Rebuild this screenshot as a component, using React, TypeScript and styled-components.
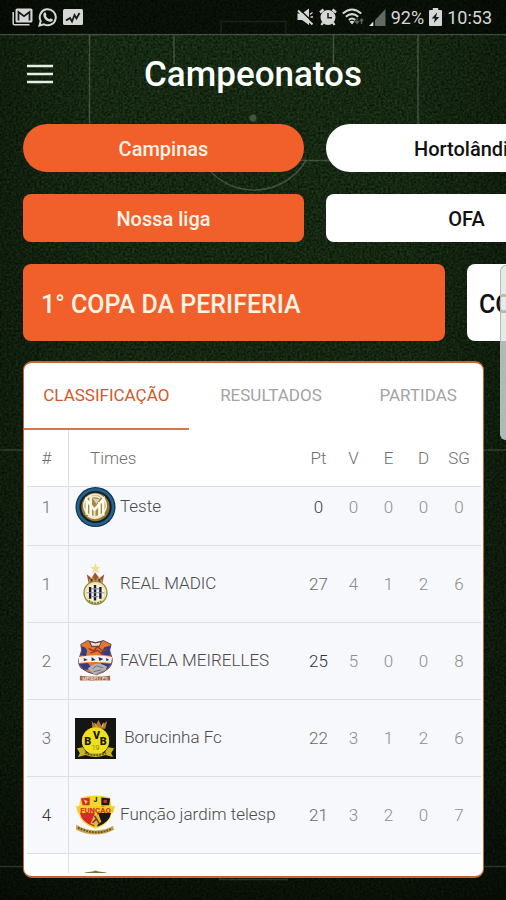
import React, { useLayoutEffect, useRef, useState } from "react";
import styled, { createGlobalStyle } from "styled-components";

const ORANGE = "#f1602a";

const GlobalStyle = createGlobalStyle`
  * { box-sizing: border-box; }
  body { margin: 0; background: #0f2414; font-family: Roboto, "Liberation Sans", sans-serif; }
  button { font-family: inherit; cursor: pointer; }
`;

const Screen = styled.div`
  position: relative;
  height: 100vh;
  display: flex;
  flex-direction: column;
  overflow: hidden;
  isolation: isolate;
`;

const Pitch = styled.svg`
  position: absolute;
  inset: 0;
  width: 100%;
  height: 100%;
  z-index: -1;
`;

const StatusBar = styled.div`
  flex: none;
  height: 34px;
  padding: 0 14px 0 12px;
  display: flex;
  justify-content: space-between;
  align-items: center;
  background: rgba(0, 0, 0, 0.6);
  color: #d6d6d6;
  font-size: 18px;
`;

const StatusGroup = styled.div<{ $gap: number }>`
  display: flex;
  align-items: center;
  gap: ${(p) => p.$gap}px;
`;

const Header = styled.header`
  flex: none;
  height: 90px;
  padding: 0 25px 10px;
  display: grid;
  grid-template-columns: 28px 1fr 28px;
  align-items: center;
`;

const MenuButton = styled.button`
  height: 28px;
  padding: 0;
  border: 0;
  background: none;
  display: flex;
  align-items: center;
`;

const Title = styled.h1`
  margin: 0;
  padding-top: 2px;
  text-align: center;
  color: #fff;
  font-size: 35px;
  line-height: 40px;
  font-weight: 500;
`;

const Carousel = styled.div`
  flex: none;
  display: flex;
  gap: 22px;
  padding: 0 23px;
  margin-bottom: 22px;
  overflow: hidden;
`;

const Chip = styled.button<{ $active?: boolean; $round?: boolean }>`
  flex: 0 0 281px;
  height: 48px;
  padding: 2px 0 0;
  border: 0;
  border-radius: ${(p) => (p.$round ? 24 : 8)}px;
  background: ${(p) => (p.$active ? ORANGE : "#fff")};
  color: ${(p) => (p.$active ? "#fff3e6" : "#111")};
  font-size: 20px;
  font-weight: 500;
`;

const CupCard = styled.button<{ $active?: boolean }>`
  flex: 0 0 422px;
  height: 77px;
  padding: 3px ${(p) => (p.$active ? 18 : 12)}px 0;
  border: 0;
  border-radius: 8px;
  background: ${(p) => (p.$active ? ORANGE : "#fff")};
  color: ${(p) => (p.$active ? "#fff3e6" : "#111")};
  font-size: 25px;
  font-weight: 500;
  text-align: left;
`;

const Panel = styled.main`
  flex: 1;
  min-height: 0;
  margin: -2px 22px 22px 23px;
  padding-bottom: 3px;
  display: flex;
  flex-direction: column;
  border: 1px solid #c9622f;
  border-width: 2px 1px;
  border-radius: 9px;
  background: #fff;
  overflow: hidden;
`;

const Tabs = styled.div`
  flex: none;
  display: flex;
  height: 67px;
`;

const Tab = styled.button<{ $share: number; $active: boolean }>`
  flex: ${(p) => p.$share} 1 0;
  min-width: 0;
  padding: 0 0 2px;
  border: 0;
  border-bottom: 2px solid ${(p) => (p.$active ? "#d9754f" : "transparent")};
  background: none;
  color: ${(p) => (p.$active ? "#d0592b" : "#a3a3a3")};
  font-size: 17px;
`;

const Scroller = styled.div`
  flex: 1;
  min-height: 0;
  margin: 0 2px 0 3px;
  overflow-y: auto;
  scrollbar-width: none;
`;

const Standings = styled.table`
  width: 100%;
  table-layout: fixed;
  border-collapse: separate;
  border-spacing: 0;
  font-size: 17px;
  font-weight: 300;
`;

const HeadCell = styled.th<{ $width?: number; $align?: string }>`
  position: sticky;
  top: 0;
  z-index: 1;
  width: ${(p) => (p.$width ? p.$width + "px" : "auto")};
  height: 57px;
  padding: 0;
  background: #fff;
  border-bottom: 1px solid #dcdee2;
  color: #6f6f6f;
  font-weight: 300;
  text-align: ${(p) => p.$align || "center"};

  &:first-child { border-right: 1px solid #dddfe3; padding-right: 2px; }
  &:nth-child(2) { padding-left: 21px; }
  &:last-child { padding-right: 4px; }
`;

const Cell = styled.td<{ $tone?: string }>`
  height: 77px;
  padding: 0;
  background: #f7f8fc;
  border-bottom: 1px solid #dcdee2;
  color: ${(p) => p.$tone || "#8d8d8d"};
  text-align: center;

  &:first-child { border-right: 1px solid #dddfe3; padding-right: 2px; }
  &:last-child { padding-right: 4px; }
  tr:last-child > & { background: #fdfdfe; }
`;

const Team = styled.div`
  display: flex;
  align-items: center;
  gap: 4px;
  padding-left: 6px;
  white-space: nowrap;
`;

const TeamName = styled.span`
  padding-bottom: 3px;
  color: #4a4a4a;
`;

const EdgeHandle = styled.div`
  position: absolute;
  top: 265px;
  right: 0;
  width: 6px;
  height: 175px;
  border: 1px solid #b4b9b5;
  border-right: 0;
  border-radius: 6px 0 0 6px;
  background: rgba(224, 229, 225, 0.78);
`;

const PitchBackground = () => (
  <Pitch viewBox="0 0 506 900" preserveAspectRatio="none" aria-hidden="true">
    <defs>
      <filter id="grass" x="0" y="0" width="100%" height="100%" colorInterpolationFilters="sRGB">
        <feTurbulence type="fractalNoise" baseFrequency="0.43" numOctaves="2" seed="4" />
        <feColorMatrix values="0.18 0 0 0 -0.005  0.24 0 0 0 0.04  0.16 0 0 0 -0.01  0 0 0 0 1" />
      </filter>
      <linearGradient id="shade" x1="0" y1="0" x2="0" y2="1">
        <stop offset="0" stopColor="#000" stopOpacity="0" />
        <stop offset="0.5" stopColor="#000" stopOpacity="0.1" />
        <stop offset="0.8" stopColor="#000" stopOpacity="0.22" />
        <stop offset="1" stopColor="#000" stopOpacity="0.6" />
      </linearGradient>
      <linearGradient id="sides" x1="0" y1="0" x2="1" y2="0">
        <stop offset="0" stopColor="#000" stopOpacity="0.25" />
        <stop offset="0.2" stopColor="#000" stopOpacity="0" />
        <stop offset="0.8" stopColor="#000" stopOpacity="0" />
        <stop offset="1" stopColor="#000" stopOpacity="0.25" />
      </linearGradient>
    </defs>
    <rect width="506" height="900" filter="url(#grass)" />
    <rect width="506" height="900" fill="url(#shade)" />
    <rect width="506" height="900" fill="url(#sides)" />
    <g fill="none" stroke="#b9c4bb" strokeOpacity="0.27" strokeWidth="1.5">
      <path d="M0 34.5H506M221 34V21.500H286V34" />
      <path d="M89.500 35V160.500H418V35M174 35V64M333.500 35V64" />
      <path d="M203 160.500C225 200 282 200 306 160.500" />
      <path d="M0 450H506M0 866.500H506M220 867V879.500H287V867" strokeOpacity="0.2" />
      <circle cx="253" cy="118" r="3.500" fill="#b9c4bb" fillOpacity="0.27" stroke="none" />
    </g>
  </Pitch>
);

const GmailIcon = () => (
  <svg width="21" height="18" viewBox="0 0 21 18">
    <path d="M1.200 4V15.500Q1.200 16.800 2.500 16.800H17.500" fill="none" stroke="#d6d6d6" strokeWidth="1.500" />
    <rect x="3.500" y="0.500" width="17" height="14" rx="1.500" fill="#d6d6d6" />
    <path d="M6.500 12.500V4L12 8.200 17.500 4V12.500" fill="none" stroke="#111a13" strokeWidth="1.700" />
  </svg>
);

const WhatsappIcon = () => (
  <svg width="20" height="20" viewBox="0 0 20 20">
    <path d="M1.500 18.500L2.700 14A8 8 0 1 1 6 17.300Z" fill="none" stroke="#d6d6d6" strokeWidth="2" />
    <path d="M7.300 5.200L8.600 7.700 7.900 8.900Q9.200 11.300 11.400 12.200L12.500 11.200 15 12.500Q14.700 15 12.300 14.800C8 14.200 5.300 10.700 5.300 7.400Q5.600 5.300 7.300 5.200Z" fill="#d6d6d6" />
  </svg>
);

const ActivityIcon = () => (
  <svg width="20" height="16" viewBox="0 0 20 16">
    <rect width="20" height="16" rx="1.500" fill="#d6d6d6" />
    <path d="M3 11.500L7 9 9 12.500 11.500 6 13.500 9.500 16.500 4" fill="none" stroke="#111a13" strokeWidth="1.800" />
  </svg>
);

const MuteIcon = () => (
  <svg width="17" height="18" viewBox="0 0 17 18">
    <path d="M0.500 5.500H5L12 0.500V17L5 12H0.500Z" fill="#d6d6d6" />
    <path d="M2.500 1.500L17 15" stroke="#0a110b" strokeWidth="1.500" />
    <path d="M1 2.500L15.500 16.500" stroke="#d6d6d6" strokeWidth="2" />
    <path d="M13 6.500L15.500 4.500M13.500 9H16" stroke="#d6d6d6" strokeWidth="1.300" />
  </svg>
);

const AlarmIcon = () => (
  <svg width="18" height="18" viewBox="0 0 18 18">
    <path d="M1 4.500L4.500 1.500M17 4.500L13.500 1.500M4 14.500L2.500 17M14 14.500L15.500 17" stroke="#d6d6d6" strokeWidth="2.400" />
    <circle cx="9" cy="9.500" r="7.500" fill="#d6d6d6" />
    <path d="M9 5V9.800H13" fill="none" stroke="#152018" strokeWidth="1.500" />
  </svg>
);

const WifiIcon = () => (
  <svg width="22" height="18" viewBox="0 0 22 18">
    <g fill="none" stroke="#d6d6d6" strokeWidth="2">
      <path d="M0.800 5.500Q10 -2.500 19.200 5.500" />
      <path d="M3.800 8.800Q10 3.500 16.200 8.800" />
      <path d="M6.800 12Q10 9 13.200 12" />
    </g>
    <path d="M7.500 13.500L10 16.500 12.500 13.500Q10 12 7.500 13.500Z" fill="#d6d6d6" />
    <path d="M15 10.500V15M13 13L15 15.500 17 13M19.500 16V11M17.800 13L19.500 11 21.200 13" stroke="#59605b" strokeWidth="1.300" fill="none" />
  </svg>
);

const SignalIcon = () => (
  <svg width="17" height="17" viewBox="0 0 17 17">
    <path d="M16.500 0V17H0.500Z" fill="#626964" />
    <path d="M4.500 12.500V17H0Z" fill="#e6e6e6" />
    <path d="M5.200 11V17" stroke="#0a110b" strokeWidth="1.500" />
  </svg>
);

const BatteryIcon = () => (
  <svg width="13" height="18" viewBox="0 0 12 18" preserveAspectRatio="none">
    <path d="M3.500 0H8.500V2H11Q12 2 12 3V17Q12 18 11 18H1Q0 18 0 17V3Q0 2 1 2H3.500Z" fill="#d6d6d6" />
    <path d="M7.500 4.500L2.500 10.500H5.500L4.500 15L9.500 9H6.500Z" fill="#0f1811" />
  </svg>
);

const MenuIcon = () => (
  <svg width="28" height="20" viewBox="0 0 28 20">
    <path d="M2 2H28M2 10H28M2 18H28" stroke="#e4eee4" strokeWidth="2.300" />
  </svg>
);

const InterCrest = () => (
  <svg width="41" height="42" viewBox="0 0 42 42">
    <circle cx="21" cy="21" r="20.500" fill="#15314a" />
    <circle cx="21" cy="21" r="18" fill="none" stroke="#22648f" strokeWidth="2.500" />
    <circle cx="21" cy="21" r="16" fill="#141b1c" />
    <circle cx="21" cy="21" r="14.500" fill="#8c7431" />
    <circle cx="20.500" cy="19.500" r="11.500" fill="#a38b4a" stroke="#f2eddc" strokeWidth="1.600" />
    <path d="M12 29V14L20 24 29 13V30M16 9V31M25 16V31" fill="none" stroke="#fffbed" strokeWidth="2.600" />
    <path d="M15 12Q20 8 26 12M13 30Q20 35 28 30M20 25V33" fill="none" stroke="#eee5c7" strokeWidth="2" />
    <path d="M18 12L22 18 25 13" fill="#d9d2b4" />
  </svg>
);

const RealCrest = () => (
  <svg width="41" height="42" viewBox="0 0 42 42">
    <path d="M21 0L22.600 3.500 26.300 3.700 23.500 6.200 24.500 10 21 8 17.500 10 18.500 6.200 15.500 3.700 19.300 3.500Z" fill="#f2dc96" />
    <path d="M12 11L17 15 20.500 9 25 15 30 11 28 20H14Z" fill="#9e5730" />
    <path d="M14 17L18 14 21 18 24 14 28 17 27 20H15Z" fill="#cc9461" />
    <path d="M17 16V19M25 16V19" stroke="#5a2b1c" strokeWidth="2" />
    <circle cx="21" cy="30" r="11.800" fill="#eee8a0" stroke="#8a8747" strokeWidth="1.300" />
    <circle cx="21" cy="30" r="8.800" fill="#f6f6f1" />
    <path d="M15.500 24V36M20.500 22V38M26 24V36" stroke="#1a1b2b" strokeWidth="2.500" />
    <path d="M12 30H30M17 26H25M17 34H24" stroke="#8f90a0" strokeWidth="1.200" />
    <path d="M14 38Q21 43 28 38" fill="none" stroke="#76733c" strokeWidth="1.500" strokeDasharray="2 1" />
  </svg>
);

const FavelaCrest = () => (
  <svg width="41" height="44" viewBox="0 0 42 44">
    <path d="M13 1Q21 5 29 1L37 5Q34 11 37 16 40 23 35 29 30 34 22 36 12 34 6 29 2 24 5 17 8 11 6 5Z" fill="#e6762c" stroke="#5c4652" strokeWidth="1" />
    <path d="M6 7Q15 8 11 17L5 16Q9 11 6 7ZM30 8L37 6Q34 12 37 17L26 15ZM4 25L13 24 19 31 9 31ZM27 24L37 25 33 30H25Z" fill="#333c88" />
    <path d="M15 2Q21 5 27 2L25 7H17Z" fill="#f5dfc4" stroke="#49364a" />
    <path d="M14 9L19 12 23 7 28 12 33 10M16 14L23 11 28 15" fill="none" stroke="#913b29" strokeWidth="1.500" />
    <path d="M4 18Q21 14 38 18L37 24Q21 22 4 24Z" fill="#f3f1f2" />
    <path d="M9 19L13 21 9 22ZM17 18L21 21 17 22ZM24 18L29 20 25 22ZM32 19L35 21 32 22Z" fill="#292a42" />
    <path d="M13 30Q22 21 33 28 30 35 20 36Z" fill="#b3b2b6" />
    <path d="M18 30L22 27 29 29M19 33L27 31M23 35L30 32" stroke="#716f76" fill="none" />
    <path d="M5 37Q21 39 36 37V42Q20 43 5 42Z" fill="#a3674e" />
    <text x="20.500" y="42" textAnchor="middle" fontSize="5" fontWeight="700" fill="#f3d5bd">MEIRELLES</text>
  </svg>
);

const BorucinhaCrest = () => (
  <svg width="41" height="41" viewBox="0 0 42 42">
    <rect width="42" height="42" fill="#151513" />
    <path d="M17 3L21 8 24 2 27 8 33 3 31 11H18Z" fill="#b77a32" />
    <path d="M20 5L22 9M29 5L28 9" stroke="#f3ce72" />
    <circle cx="21" cy="23.500" r="14" fill="#efdf20" />
    <path d="M2 31L8 30 12 36 30 36 34 30 40 31 37 36 39 40 31 38Q21 42 11 38L3 40 5 36Z" fill="#c8b724" />
    <path d="M10 36Q21 40 32 36" fill="none" stroke="#514c19" strokeWidth="1.500" strokeDasharray="2 1" />
    <g fill="#181812" fontWeight="900" fontSize="11" textAnchor="middle">
      <text x="13" y="28">B</text>
      <text x="22" y="21">V</text>
      <text x="29" y="28">B</text>
    </g>
    <text x="21" y="33" fontSize="7" textAnchor="middle" fill="#4b4717">19</text>
  </svg>
);

const FuncaoCrest = () => (
  <svg width="41" height="42" viewBox="0 0 42 42">
    <path d="M6 3Q21 -1 36 3L38 17Q37 30 21 35 5 30 3 17Z" fill="#f1d92c" />
    <path d="M6 4L15 3V11H8ZM5 19H20V33Q7 29 5 19Z" fill="#d62b2d" />
    <path d="M27 3L36 4 35 11H27ZM23 19H37Q35 29 23 33Z" fill="#1b1817" />
    <path d="M9 5L13 7 11 10Z" fill="#f5d55f" />
    <circle cx="31" cy="7" r="2" fill="#c72d28" />
    <path d="M1 12H41L39 19H3Z" fill="#f2ce29" />
    <text x="21" y="8" textAnchor="middle" fontSize="7" fontWeight="900" fill="#25200f">J</text>
    <text x="21" y="19" textAnchor="middle" fontSize="8" fontWeight="900" fill="#d43b25">FUNÇÃO</text>
    <path d="M16 30L19 22 24 20 27 28 22 32Z" fill="#dfb93f" />
    <path d="M18 29L22 25 25 30M20 22L22 25" stroke="#783525" strokeWidth="1.500" fill="none" />
    <path d="M1 31Q21 42 39 32L40 36Q21 46 1 36Z" fill="#c9a953" />
    <path d="M3 34Q21 43 38 35" fill="none" stroke="#725421" strokeWidth="2" strokeDasharray="2 1" />
  </svg>
);

const GreenCrest = () => (
  <svg width="41" height="44" viewBox="0 0 42 44">
    <path d="M10 2L18 1 21 0 24 1 32 2 30 34 21 43 12 34Z" fill="#78783a" />
    <circle cx="21" cy="21" r="8" fill="#e7dfa1" />
  </svg>
);

interface Row {
  pos?: number;
  name: string;
  crest: React.ReactNode;
  stats: number[];
  posTone?: string;
  ptTone?: string;
}

const rows: Row[] = [
  { pos: 1, name: "Teste", crest: <InterCrest />, stats: [0, 0, 0, 0, 0], ptTone: "#3e3e3e" },
  { pos: 1, name: "REAL MADIC", crest: <RealCrest />, stats: [27, 4, 1, 2, 6] },
  { pos: 2, name: "FAVELA MEIRELLES", crest: <FavelaCrest />, stats: [25, 5, 0, 0, 8], ptTone: "#333" },
  { pos: 3, name: "\u00a0Borucinha Fc", crest: <BorucinhaCrest />, stats: [22, 3, 1, 2, 6] },
  { pos: 4, name: "Função jardim telesp", crest: <FuncaoCrest />, stats: [21, 3, 2, 0, 7], posTone: "#333" },
  { name: "", crest: <GreenCrest />, stats: [] },
];

const tabs = [
  { label: "CLASSIFICAÇÃO", share: 165 },
  { label: "RESULTADOS", share: 165 },
  { label: "PARTIDAS", share: 130 },
];

export default function App() {
  const [tab, setTab] = useState(0);
  const scroller = useRef<HTMLDivElement>(null);

  useLayoutEffect(() => {
    if (scroller.current) scroller.current.scrollTop = 18;
  }, []);

  return (
    <Screen>
      <GlobalStyle />
      <PitchBackground />
      <StatusBar>
        <StatusGroup $gap={5}>
          <GmailIcon />
          <WhatsappIcon />
          <ActivityIcon />
        </StatusGroup>
        <StatusGroup $gap={5}>
          <MuteIcon />
          <AlarmIcon />
          <WifiIcon />
          <SignalIcon />
          <span>92%</span>
          <BatteryIcon />
          <span>10:53</span>
        </StatusGroup>
      </StatusBar>
      <Header>
        <MenuButton aria-label="Menu">
          <MenuIcon />
        </MenuButton>
        <Title>Campeonatos</Title>
      </Header>
      <Carousel>
        <Chip $active $round>Campinas</Chip>
        <Chip $round>Hortolândia</Chip>
      </Carousel>
      <Carousel>
        <Chip $active>Nossa liga</Chip>
        <Chip>OFA</Chip>
      </Carousel>
      <Carousel>
        <CupCard $active>1° COPA DA PERIFERIA</CupCard>
        <CupCard>COPA</CupCard>
      </Carousel>
      <Panel>
        <Tabs role="tablist">
          {tabs.map((t, i) => (
            <Tab
              key={t.label}
              role="tab"
              aria-selected={tab === i}
              $share={t.share}
              $active={tab === i}
              onClick={() => setTab(i)}
            >
              {t.label}
            </Tab>
          ))}
        </Tabs>
        <Scroller ref={scroller}>
          <Standings>
            <thead>
              <tr>
                <HeadCell $width={42}>#</HeadCell>
                <HeadCell $align="left">Times</HeadCell>
                <HeadCell $width={35}>Pt</HeadCell>
                <HeadCell $width={35}>V</HeadCell>
                <HeadCell $width={35}>E</HeadCell>
                <HeadCell $width={35}>D</HeadCell>
                <HeadCell $width={40}>SG</HeadCell>
              </tr>
            </thead>
            <tbody>
              {rows.map((r, i) => (
                <tr key={i}>
                  <Cell $tone={r.posTone || "#707070"}>{r.pos}</Cell>
                  <Cell>
                    <Team>
                      {r.crest}
                      <TeamName>{r.name}</TeamName>
                    </Team>
                  </Cell>
                  {[0, 1, 2, 3, 4].map((c) => (
                    <Cell key={c} $tone={c === 0 ? r.ptTone || "#686868" : undefined}>
                      {r.stats[c]}
                    </Cell>
                  ))}
                </tr>
              ))}
            </tbody>
          </Standings>
        </Scroller>
      </Panel>
      <EdgeHandle />
    </Screen>
  );
}
